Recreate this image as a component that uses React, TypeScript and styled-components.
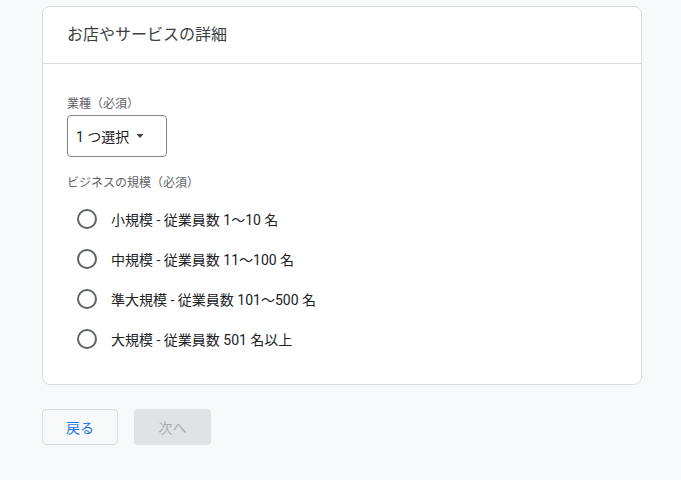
import styled, { createGlobalStyle } from 'styled-components';

const GlobalStyle = createGlobalStyle`
	html, body {
		margin: 0;
		padding: 0;
		background: #f8f9fa;
		font-family: Roboto, "Noto Sans CJK JP", "Noto Sans", sans-serif;
		color: #202124;
	}
`;

const sizes = [
	'小規模 - 従業員数 1～10 名',
	'中規模 - 従業員数 11～100 名',
	'準大規模 - 従業員数 101～500 名',
	'大規模 - 従業員数 501 名以上',
];

const App = () => (
	<Page>
		<GlobalStyle />
		<Card>
			<CardHeader>お店やサービスの詳細</CardHeader>
			<CardBody>
				<FieldLabel>業種（必須）</FieldLabel>
				<Select type="button">
					<span>1 つ選択</span>
					<svg width="8" height="4" viewBox="0 0 8 4">
						<path d="M0.5 0h7L4 4z" fill="#3c4043" />
					</svg>
				</Select>
				<FieldLabel $spaced>ビジネスの規模（必須）</FieldLabel>
				<RadioList>
					{sizes.map((label) => (
						<RadioRow key={label}>
							<RadioTarget>
								<RadioCircle />
							</RadioTarget>
							<RadioText>{label}</RadioText>
						</RadioRow>
					))}
				</RadioList>
			</CardBody>
		</Card>
		<Actions>
			<Button type="button">戻る</Button>
			<Button type="button" $disabled disabled>
				次へ
			</Button>
		</Actions>
	</Page>
);

const Page = styled.div`
	padding: 6px 0 0 42px;
	width: 600px;
	min-height: 100vh;
	box-sizing: content-box;
`;

const Card = styled.section`
	background: #fff;
	border: 1px solid #dadce0;
	border-radius: 8px;
`;

const CardHeader = styled.h2`
	margin: 0;
	height: 57px;
	box-sizing: border-box;
	padding: 0 24px 4px;
	display: flex;
	align-items: center;
	font-size: 16px;
	font-weight: 400;
	color: #3c4043;
	border-bottom: 1px solid #dadce0;
`;

const CardBody = styled.div`
	padding: 32px 24px 25px;
`;

const FieldLabel = styled.div<{ $spaced?: boolean }>`
	font-size: 12px;
	line-height: 16px;
	color: #5f6368;
	margin-top: ${({ $spaced }) => ($spaced ? '18px' : '0')};
`;

const Select = styled.button`
	margin-top: 3px;
	display: inline-flex;
	align-items: center;
	gap: 7px;
	height: 42px;
	padding: 0 22px 0 8px;
	background: #fff;
	border: 1px solid #80868b;
	border-radius: 4px;
	font-family: inherit;
	font-size: 14px;
	color: #202124;
	cursor: pointer;
`;

const RadioList = styled.div`
	margin-top: 8px;
	display: flex;
	flex-direction: column;
`;

const RadioRow = styled.label`
	display: flex;
	align-items: center;
	height: 40px;
	gap: 4px;
	cursor: pointer;
`;

const RadioTarget = styled.span`
	width: 40px;
	height: 40px;
	display: flex;
	align-items: center;
	justify-content: center;
`;

const RadioCircle = styled.span`
	width: 20px;
	height: 20px;
	box-sizing: border-box;
	border: 2px solid #5f6368;
	border-radius: 50%;
`;

const RadioText = styled.span`
	font-size: 14px;
	color: #202124;
`;

const Actions = styled.div`
	margin-top: 24px;
	display: flex;
	gap: 16px;
`;

const Button = styled.button<{ $disabled?: boolean }>`
	width: 76px;
	height: 36px;
	border-radius: 4px;
	font-family: inherit;
	font-size: 14px;
	font-weight: 400;
	border: 1px solid ${({ $disabled }) => ($disabled ? 'transparent' : '#dadce0')};
	background: ${({ $disabled }) => ($disabled ? '#e1e2e3' : 'transparent')};
	color: ${({ $disabled }) => ($disabled ? '#a8aaad' : '#1a73e8')};
	cursor: ${({ $disabled }) => ($disabled ? 'default' : 'pointer')};
	& + & {
		width: 77px;
	}
`;

export default App;
